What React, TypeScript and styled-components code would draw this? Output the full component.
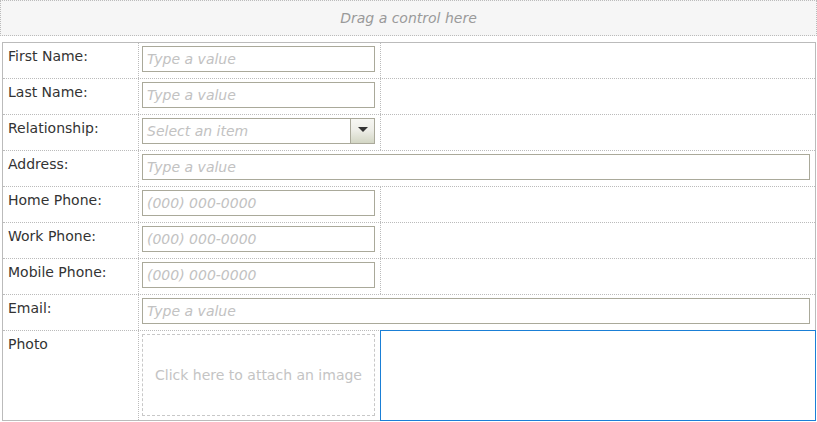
import React from 'react'
import styled, {createGlobalStyle} from 'styled-components'

const GlobalStyle = createGlobalStyle`
  html, body {
    margin: 0;
    padding: 0;
    background: #ffffff;
  }
  body {
    font-family: "DejaVu Sans", Verdana, sans-serif;
    font-size: 14px;
    color: #333333;
  }
`

const Page = styled.div`
  width: 817px;
`

const DropZone = styled.div`
  height: 34px;
  border: 1px dotted #bbbbbb;
  background: #f6f6f6;
  display: flex;
  align-items: center;
  justify-content: center;
  font-style: italic;
  color: #9a9a9a;
  margin-bottom: 6px;
`

const FormTable = styled.div`
  margin: 0 1px 0 2px;
  border: 1px solid #bbbbbb;
  display: flex;
  flex-direction: column;
`

const Row = styled.div<{$tall?: boolean}>`
  display: grid;
  grid-template-columns: 136px 242px 1fr;
  height: ${p => (p.$tall ? '89px' : '35px')};
  border-bottom: 1px dotted #bbbbbb;

  &:last-child {
    border-bottom: none;
  }
`

const LabelCell = styled.div`
  border-right: 1px dotted #bbbbbb;
  padding: 5px 0 0 5px;
  color: #333333;
  line-height: 17px;
`

const Cell = styled.div<{$span?: number; $last?: boolean; $selected?: boolean}>`
  grid-column: span ${p => p.$span || 1};
  border-right: ${p => (p.$last ? 'none' : '1px dotted #bbbbbb')};
  padding: 3px 5px 0 3px;
  outline: ${p => (p.$selected ? '1px solid #1a7fd6' : 'none')};
  position: relative;
`

const TextInput = styled.input`
  box-sizing: border-box;
  width: 100%;
  height: 26px;
  border: 1px solid #aaa99a;
  padding: 0 4px;
  font-family: "DejaVu Sans", Verdana, sans-serif;
  font-size: 14px;
  color: #333333;
  background: #ffffff;
  outline: none;

  &::placeholder {
    font-style: italic;
    color: #c2c2c2;
  }
`

const SelectBox = styled.div`
  box-sizing: border-box;
  width: 100%;
  height: 26px;
  border: 1px solid #aaa99a;
  display: flex;
  background: #ffffff;
`

const SelectText = styled.div`
  flex: 1;
  padding: 0 4px;
  display: flex;
  align-items: center;
  font-style: italic;
  color: #c2c2c2;
`

const SelectButton = styled.div`
  width: 23px;
  border-left: 1px solid #aaa99a;
  background: linear-gradient(#f7f7f3 0%, #eeeee8 45%, #d3d6c4 100%);
  display: flex;
  align-items: center;
  justify-content: center;
`

const Caret = styled.div`
  width: 0;
  height: 0;
  border-left: 5px solid transparent;
  border-right: 5px solid transparent;
  border-top: 5px solid #333333;
  margin-top: -3px;
`

const AttachBox = styled.div`
  box-sizing: border-box;
  height: 82px;
  border: 1px dashed #c8c8c8;
  display: flex;
  align-items: center;
  justify-content: center;
  color: #c4c4c4;
`

type Field = {label: string; kind: 'text' | 'select' | 'phone'; wide?: boolean}

const fields: Field[] = [
  {label: 'First Name:', kind: 'text'},
  {label: 'Last Name:', kind: 'text'},
  {label: 'Relationship:', kind: 'select'},
  {label: 'Address:', kind: 'text', wide: true},
  {label: 'Home Phone:', kind: 'phone'},
  {label: 'Work Phone:', kind: 'phone'},
  {label: 'Mobile Phone:', kind: 'phone'},
  {label: 'Email:', kind: 'text', wide: true},
]

const FieldControl: React.FC<{field: Field}> = ({field}) => {
  if (field.kind === 'select') {
    return (
      <SelectBox>
        <SelectText>Select an item</SelectText>
        <SelectButton><Caret/></SelectButton>
      </SelectBox>
    )
  }
  return <TextInput placeholder={field.kind === 'phone' ? '(000) 000-0000' : 'Type a value'}/>
}

const App: React.FC = () => {
  return (
    <Page>
      <GlobalStyle/>
      <DropZone>Drag a control here</DropZone>
      <FormTable>
        {fields.map(field => (
          <Row key={field.label}>
            <LabelCell>{field.label}</LabelCell>
            {field.wide ? (
              <Cell $span={2} $last>
                <FieldControl field={field}/>
              </Cell>
            ) : (
              <>
                <Cell>
                  <FieldControl field={field}/>
                </Cell>
                <Cell $last/>
              </>
            )}
          </Row>
        ))}
        <Row $tall>
          <LabelCell>Photo</LabelCell>
          <Cell>
            <AttachBox>Click here to attach an image</AttachBox>
          </Cell>
          <Cell $last $selected/>
        </Row>
      </FormTable>
    </Page>
  )
}

export default App
